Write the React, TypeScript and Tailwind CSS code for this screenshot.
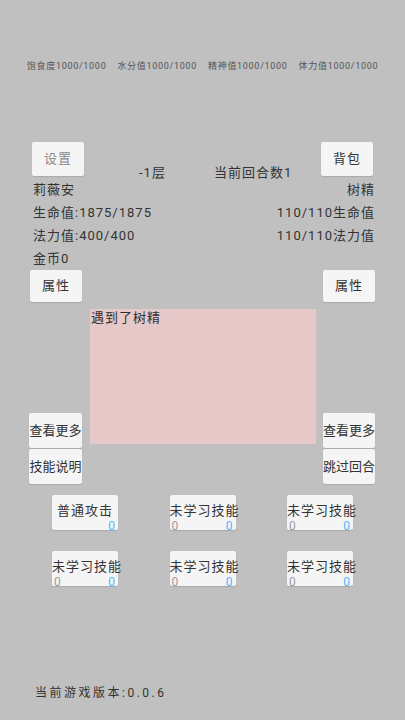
const font = { fontFamily: 'Roboto, "Noto Sans CJK SC", sans-serif' };

function Btn({ label, className = '', muted = false }: { label: string; className?: string; muted?: boolean }) {
    return (
        <div className={`flex items-center justify-center whitespace-nowrap rounded-[2px] bg-[#f5f5f5] text-[13px] shadow-[0_1px_1px_rgba(0,0,0,0.12)] ${muted ? 'text-[#8a8a8a]' : 'text-[#333]'} ${className}`}>
            {label}
        </div>
    );
}

function Skill({ label, learned = false }: { label: string; learned?: boolean }) {
    return (
        <div className="relative h-[35px] w-[66px] rounded-[2px] bg-[#f5f5f5] shadow-[0_1px_1px_rgba(0,0,0,0.12)]">
            <div className="whitespace-nowrap pt-[8px] text-center text-[13px] leading-[15px] tracking-[1px] text-[#333]">{label}</div>
            {!learned && <span className="absolute bottom-[-2px] left-[2px] text-[12px] leading-[11px] text-[#9a9a9a]">0</span>}
            <span className="absolute bottom-[-2px] right-[3px] text-[12px] leading-[11px] text-[#4fb8f5]">0</span>
        </div>
    );
}

export default function App() {
    const stats = ['饱食度1000/1000', '水分值1000/1000', '精神值1000/1000', '体力值1000/1000'];
    return (
        <div className="flex h-[720px] w-[405px] flex-col bg-[#c0c0c0] text-[#333]" style={font}>
            <div className="mt-[60px] flex h-[12px] justify-center gap-[11px] text-[9px] leading-[12px] tracking-[0.7px] text-[#555]">
                {stats.map((s) => <span key={s}>{s}</span>)}
            </div>

            <div className="mt-[70px] flex h-[34px] px-[32px]">
                <Btn label="设置" muted className="h-[34px] w-[52px] tracking-[1px]" />
                <div className="flex flex-1 pl-[55px] pt-[23px] text-[13px] leading-[16px] tracking-[1px]">
                    <span>-1层</span>
                    <span className="ml-[48px]">当前回合数1</span>
                </div>
                <Btn label="背包" className="h-[34px] w-[52px] tracking-[1px]" />
            </div>

            <div className="mt-[2px] pl-[33px] pr-[30px] text-[13px] leading-[23px] tracking-[1px]">
                <div className="flex justify-between"><span>莉薇安</span><span>树精</span></div>
                <div className="flex justify-between"><span>生命值:1875/1875</span><span>110/110生命值</span></div>
                <div className="flex justify-between"><span>法力值:400/400</span><span>110/110法力值</span></div>
                <div className="flex justify-between"><span>金币0</span></div>
            </div>

            <div className="flex h-[32px] justify-between px-[30px]">
                <Btn label="属性" className="h-[32px] w-[52px] tracking-[1px]" />
                <Btn label="属性" className="h-[32px] w-[52px] tracking-[1px]" />
            </div>

            <div className="mt-[7px] flex">
                <div className="ml-[29px] flex w-[53px] flex-col gap-[1px] pt-[104px]">
                    <Btn label="查看更多" className="h-[35px]" />
                    <Btn label="技能说明" className="h-[35px]" />
                </div>
                <div className="ml-[8px] h-[135px] w-[226px] bg-[#e6c8c8] px-[1px] pt-[1px] text-[13px] leading-[16px] tracking-[1px] text-[#2e2e2e]">
                    遇到了树精
                </div>
                <div className="ml-[7px] flex w-[52px] flex-col gap-[1px] pt-[104px]">
                    <Btn label="查看更多" className="h-[35px]" />
                    <Btn label="跳过回合" className="h-[35px]" />
                </div>
            </div>

            <div className="mt-[11px] flex flex-col gap-[21px] pl-[52px]">
                <div className="flex gap-[51.5px]">
                    <Skill label="普通攻击" learned />
                    <Skill label="未学习技能" />
                    <Skill label="未学习技能" />
                </div>
                <div className="flex gap-[51.5px]">
                    <Skill label="未学习技能" />
                    <Skill label="未学习技能" />
                    <Skill label="未学习技能" />
                </div>
            </div>

            <div className="mt-[99px] pl-[35px] text-[12px] leading-[16px] tracking-[2.5px]">当前游戏版本:0.0.6</div>
        </div>
    );
}
